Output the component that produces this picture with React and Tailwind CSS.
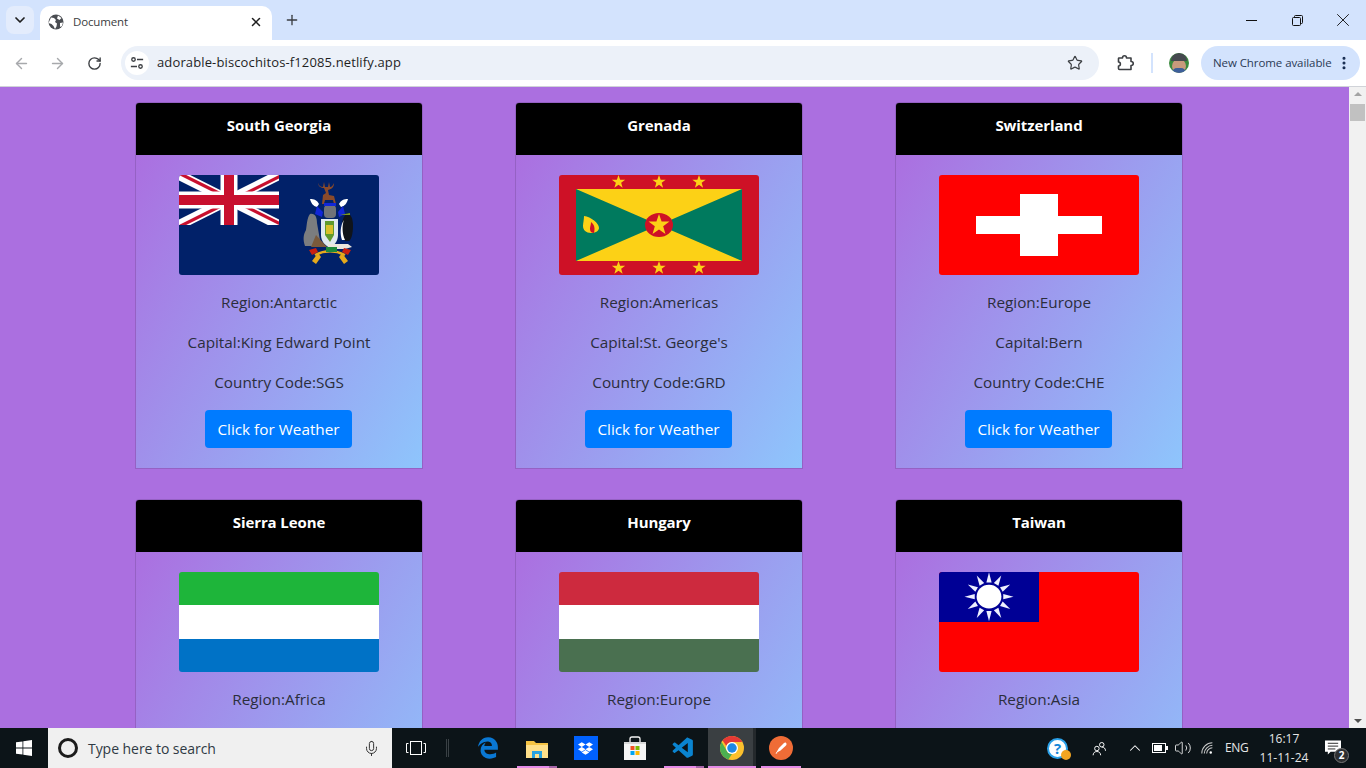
import React from "react";
import { ChevronDown, X, Plus, ArrowLeft, ArrowRight, RotateCw, Star, EllipsisVertical, Mic, ChevronUp, Volume2 } from "lucide-react";
import { FaDropbox, FaEdgeLegacy } from "react-icons/fa";
import { VscVscode } from "react-icons/vsc";

const starPts = (cx, cy, r) => {
  const p = [];
  for (let i = 0; i < 10; i++) {
    const rad = i % 2 ? r * 0.4 : r;
    const a = -Math.PI / 2 + (i * Math.PI) / 5;
    p.push(`${(cx + rad * Math.cos(a)).toFixed(2)},${(cy + rad * Math.sin(a)).toFixed(2)}`);
  }
  return p.join(" ");
};

const FlagSG = () => (
  <svg viewBox="0 0 200 100" className="block w-full h-full">
    <rect width="200" height="100" fill="#012169" />
    <svg x="0" y="0" width="100" height="50" viewBox="0 0 100 50">
      <path d="M0 0L100 50M100 0L0 50" stroke="#fff" strokeWidth="10" />
      <path d="M0 0L50 25M100 50L50 25" stroke="#c8102e" strokeWidth="3.2" transform="translate(1.2 -1.2)" />
      <path d="M100 0L50 25M0 50L50 25" stroke="#c8102e" strokeWidth="3.2" transform="translate(1.2 1.2)" />
      <path d="M50 0V50M0 25H100" stroke="#fff" strokeWidth="17" />
      <path d="M50 0V50M0 25H100" stroke="#c8102e" strokeWidth="10" />
    </svg>
    <path d="M139 8c1 3 3 4 5 4l1-5 1 5h3l1-5 1 5c2 0 3-2 4-4 0 4-2 6-6 7l1 5 5 1 2 8h-2l-1-4h-8l-1 4h-2l1-9 3-2-2-5c-3 0-6-2-6-5z" fill="#8a4a2a" />
    <path d="M131 24c4 0 7 1 9 5l-2 3c-4-1-6-4-7-8zM169 24c-4 0-7 1-9 5l2 3c4-1 6-4 7-8z" fill="#fff" />
    <path d="M138 31l6 6-1 5-7-3zM164 31l-5 6 1 5 6-3z" fill="#1126d8" />
    <rect x="145" y="30" width="12" height="13" rx="4" fill="#6f7278" />
    <rect x="145" y="28" width="12" height="3" fill="#1126d8" />
    <path d="M131 39c5-1 7 3 7 9l4 23h-16c-2-6-2-11 1-16 1-6 1-12 4-16z" fill="#7b7d7f" />
    <path d="M142 44h17v16c0 7-5 11-8 13-4-2-9-6-9-13z" fill="#dfe9ee" />
    <path d="M146 46h9v14l-4 7-5-7z" fill="#5f9a2d" />
    <path d="M147 50h7v9h-7z" fill="#d8c02a" />
    <path d="M137 60l11 12h-16z" fill="#7a5a3b" />
    <path d="M168 38c4 1 6 6 6 13 0 8-2 14-4 15h-4c-2-3-3-8-3-14 0-6 1-10 5-14z" fill="#10141a" />
    <path d="M165 45c-2 5-2 14 1 20h-3c-2-6-2-14 2-20z" fill="#fff" />
    <path d="M161 40l10-2v2z" fill="#7c9a20" />
    <path d="M149 69h20l4 3-7 2h-17z" fill="#ece7dc" />
    <path d="M136 80c10-5 20-5 30 0" fill="none" stroke="#e5a91c" strokeWidth="2.500" />
    <path d="M130 75l7-2 2 4-6 3zM172 75l-7-2-2 4 6 3z" fill="#c81f10" />
    <path d="M133 86l6-8 3 4-5 7zM169 86l-6-8-3 4 5 7z" fill="#e5a91c" />
    <path d="M147 72h11v5h-11z" fill="#1d8a3a" />
  </svg>
);

const FlagGD = () => (
  <svg viewBox="0 0 200 100" className="block w-full h-full">
    <rect width="200" height="100" fill="#ce1126" />
    <rect x="17" y="14" width="166" height="72" fill="#fcd116" />
    <path d="M17 14L100 50L17 86zM183 14L100 50L183 86z" fill="#007a5e" />
    <ellipse cx="100" cy="50" rx="14" ry="12" fill="#ce1126" />
    <polygon points={starPts(100, 50, 11)} fill="#fcd116" />
    {[59.5, 100, 140].map((x) => (
      <React.Fragment key={x}>
        <polygon points={starPts(x, 7, 7)} fill="#fcd116" />
        <polygon points={starPts(x, 93, 7)} fill="#fcd116" />
      </React.Fragment>
    ))}
    <path d="M25 41c7 1 15 7 15 12 0 3-4 5-8 5-5 0-8-3-8-7 0-3 1-6 1-10z" fill="#fcd116" />
    <path d="M32 47c4 3 4 7 3 11-2 0-4-1-4-4 0-3 1-4 1-7z" fill="#ce1126" />
  </svg>
);

const FlagCH = () => (
  <svg viewBox="0 0 200 100" className="block w-full h-full">
    <rect width="200" height="100" fill="#ff0000" />
    <path d="M81 19h38v22h44v18h-44v22H81V59H37V41h44z" fill="#fff" />
  </svg>
);

const Tri = ({ a, b, c }) => (
  <div className="flex flex-col h-full">
    <div className="flex-1" style={{ background: a }} />
    <div className="flex-1" style={{ background: b }} />
    <div className="flex-1" style={{ background: c }} />
  </div>
);

const FlagTW = () => (
  <svg viewBox="0 0 200 100" className="block w-full h-full">
    <rect width="200" height="100" fill="#ff0000" />
    <rect width="100" height="50" fill="#000095" />
    {Array.from({ length: 12 }).map((_, i) => {
      const a = (i * Math.PI) / 6;
      const d = (Math.PI / 12) * 0.7;
      const R = 24.5, r = 14.5;
      const pt = (rad, ang) => `${(50 + rad * Math.cos(ang)).toFixed(2)},${(24.7 + rad * Math.sin(ang)).toFixed(2)}`;
      return <polygon key={i} points={`${pt(R, a)} ${pt(r, a - d)} ${pt(r, a + d)}`} fill="#eef0ff" />;
    })}
    <ellipse cx="50" cy="24.7" rx="13.8" ry="13.2" fill="#000095" />
    <ellipse cx="50" cy="24.7" rx="12.4" ry="11.9" fill="#fff" />
  </svg>
);

const countries = [
  { name: "South Georgia", region: "Antarctic", capital: "King Edward Point", code: "SGS", flag: <FlagSG /> },
  { name: "Grenada", region: "Americas", capital: "St. George's", code: "GRD", flag: <FlagGD /> },
  { name: "Switzerland", region: "Europe", capital: "Bern", code: "CHE", flag: <FlagCH /> },
  { name: "Sierra Leone", region: "Africa", flag: <Tri a="#1eb53a" b="#ffffff" c="#0072c6" /> },
  { name: "Hungary", region: "Europe", flag: <Tri a="#cd2a3e" b="#ffffff" c="#4a7050" /> },
  { name: "Taiwan", region: "Asia", flag: <FlagTW /> },
];

const Card = ({ c }) => (
  <div className="w-[288px] rounded-t-[4px] border border-[#00000020] overflow-hidden">
    <div className="h-[52px] bg-black text-white text-center font-bold text-[15px] leading-[44px] tracking-[-0.1px]">{c.name}</div>
    <div className="h-[313px] bg-[linear-gradient(120deg,#ab6fe0,#8ec5fc)] flex flex-col items-center pt-5 text-[15.3px] text-[#2b2e3c]">
      <div className="w-[200px] h-[100px] rounded-[3px] overflow-hidden">{c.flag}</div>
      <p className="h-6 leading-6 mt-[15px]">Region:{c.region}</p>
      {c.capital && (
        <>
          <p className="h-6 leading-6 mt-4">Capital:{c.capital}</p>
          <p className="h-6 leading-6 mt-4">Country Code:{c.code}</p>
          <button className="mt-[16px] mr-[1px] w-[147px] h-[38px] rounded-[4px] bg-[#007bff] text-white text-[15.3px]">Click for Weather</button>
        </>
      )}
    </div>
  </div>
);

const ChromeLogo = () => (
  <svg viewBox="0 0 48 48" className="w-6 h-6">
    <circle cx="24" cy="24" r="24" fill="#fbc02d" />
    <path d="M24 0a24 24 0 0 1 20.8 12H24a12 12 0 0 0-11.3 8L5.2 8.8A24 24 0 0 1 24 0z" fill="#e53935" />
    <path d="M3.2 12L15 32l-.1.1A12 12 0 0 0 24 36l-7.300 11A24 24 0 0 1 3.200 12z" fill="#4caf50" />
    <circle cx="24" cy="24" r="12" fill="#fff" />
    <circle cx="24" cy="24" r="9.500" fill="#1e88e5" />
  </svg>
);

const Marker = ({ pos, split }) => (
  <div className={`absolute bottom-0 h-[2px] w-10 bg-[#e38ae6] ${pos}`}>
    {split && <div className="absolute right-0 top-0 bottom-0 w-2 bg-[#a565a8]" />}
  </div>
);

export default function App() {
  return (
    <div className="h-screen w-full flex flex-col overflow-hidden bg-white" style={{ fontFamily: '"Open Sans", "Noto Sans", sans-serif' }}>
      {/* tab strip */}
      <div className="h-10 shrink-0 bg-[#d3e3fd] flex items-end relative">
        <div className="w-7 h-7 ml-[6px] mb-[6px] rounded-lg bg-[#e3ecfc] flex items-center justify-center">
          <ChevronDown size={16} strokeWidth={2.6} className="text-[#1f1f1f]" />
        </div>
        <div className="ml-[6px] w-[232px] h-[34px] bg-white rounded-t-[10px] flex items-center pl-2 pb-[3px]">
          <svg viewBox="0 0 16 16" className="w-4 h-4">
            <circle cx="8" cy="8" r="7.500" fill="#4a4d52" />
            <path d="M3 3.500l3 .5 2 2-1 2 2 1.500-.5 3-1.500 2.500-1.500-3-2-2-3-1zM10 1.500l3.500 2.500-2 2-2.500-1.500zM12 9l3-.5-1 3.500-2 1z" fill="#fff" />
          </svg>
          <span className="ml-[9px] text-[11.5px] text-[#3b3d40] tracking-[-0.15px]">Document</span>
          <X size={14} strokeWidth={2.6} className="ml-auto mr-[9px] text-[#1f1f1f]" />
        </div>
        <div className="ml-[13px] mb-[13px] w-[14px] h-[14px] flex items-center justify-center">
          <Plus size={16} strokeWidth={2} className="shrink-0 text-[#3a3d41]" />
        </div>
        <div className="ml-auto h-10 flex">
          <div className="w-[46px] flex items-center justify-center"><div className="w-[11px] h-[1px] bg-[#111]" /></div>
          <div className="w-[46px] flex items-center justify-center">
            <svg viewBox="0 0 11 11" className="w-[11px] h-[11px]" fill="none" stroke="#111" strokeWidth="1">
              <rect x="0.500" y="2.500" width="8" height="8" rx="1" />
              <path d="M2.500 2.500v-1a1 1 0 0 1 1-1h6a1 1 0 0 1 1 1v6a1 1 0 0 1-1 1h-1" />
            </svg>
          </div>
          <div className="w-[46px] flex items-center justify-center"><X size={22} strokeWidth={1} className="text-[#111]" /></div>
        </div>
      </div>
      {/* toolbar */}
      <div className="h-[47px] shrink-0 bg-white border-b border-[#d0d3d8] flex items-start pt-[6px] rounded-t-[8px]">
        <div className="w-[43px] h-[34px] flex items-center justify-center"><ArrowLeft size={17} className="text-[#a7a9ac]" /></div>
        <div className="w-[29px] h-[34px] flex items-center justify-center"><ArrowRight size={17} className="text-[#a7a9ac]" /></div>
        <div className="w-[44px] h-[34px] flex items-center justify-center"><RotateCw size={15} strokeWidth={2.2} className="text-[#3c3f43]" /></div>
        <div className="ml-[5px] w-[978px] h-[34px] rounded-full bg-[#ecf1f9] flex items-center pl-1">
          <div className="w-6 h-6 rounded-full bg-white flex items-center justify-center">
            <svg viewBox="0 0 16 16" className="w-[14px] h-[14px]" fill="none" stroke="#3c3f43" strokeWidth="1.500">
              <circle cx="4" cy="4" r="2" />
              <path d="M8 4h7M1 12h7" />
              <circle cx="12" cy="12" r="2" />
            </svg>
          </div>
          <span className="ml-2 text-[13px] text-[#1f1f1f] tracking-[0.13px]">adorable-biscochitos-f12085.netlify.app</span>
          <Star size={16} strokeWidth={1.8} className="ml-auto mr-4 text-[#3c3f43]" />
        </div>
        <div className="ml-[18px] w-[18px] h-[34px] flex items-center justify-center">
          <svg viewBox="0 0 18 18" className="w-[18px] h-[18px]" fill="none" stroke="#3c3f43" strokeWidth="1.600" strokeLinejoin="round">
            <path d="M2 4h3.500c0-3 4-3 4 0H14v3.500c3 0 3 4 0 4V15.500H2.500c-.5 0-1-.5-1-1V12c2.500 0 2.500-4 0-4V4.500C1.500 4.200 1.700 4 2 4z" />
          </svg>
        </div>
        <div className="ml-[16px] mt-[7px] w-[2px] h-5 bg-[#d3e3fd]" />
        <div className="ml-[16px] mt-[7px] w-5 h-5 rounded-full overflow-hidden bg-[#3b8a3e] relative">
          <div className="absolute left-[3px] top-[6px] w-[14px] h-[14px] rounded-full bg-[#c99a7c]" />
          <div className="absolute left-[2px] top-0 w-4 h-[8px] rounded-t-full bg-[#45494f]" />
          <div className="absolute left-[3px] top-[15px] w-[14px] h-[5px] rounded-t-full bg-[#3d5f9a]" />
        </div>
        <div className="ml-3 w-[159px] h-[34px] rounded-full bg-[#d3e3fd] flex items-center pl-3 text-[11.5px] text-[#2b3a55] tracking-[-0.08px] whitespace-nowrap">
          New Chrome available
          <EllipsisVertical size={16} strokeWidth={2.6} className="ml-auto mr-2 shrink-0 text-[#152a4f]" />
        </div>
      </div>
      {/* page */}
      <div className="flex-1 min-h-0 flex">
        <main className="flex-1 min-w-0 bg-[#ab6fe0] overflow-hidden pt-[15px] pl-[135px]">
          <div className="grid grid-cols-[288px_288px_288px] gap-x-[92px] gap-y-[30px]">
            {countries.map((c) => <Card key={c.name} c={c} />)}
          </div>
        </main>
        <div className="w-[17px] shrink-0 bg-[#f1f1f1] flex flex-col items-center pt-[5px] relative">
          <div className="w-0 h-0 border-x-[4px] border-x-transparent border-b-[4px] border-b-[#a3a3a3]" />
          <div className="mt-[8px] w-[15px] h-[17px] bg-[#c1c1c1]" />
          <div className="mt-auto mb-[5px] w-0 h-0 border-x-[4px] border-x-transparent border-t-[4px] border-t-[#505050]" />
        </div>
      </div>
      {/* taskbar */}
      <div className="h-10 shrink-0 bg-[#0c1418] flex items-center text-white">
        <div className="w-12 h-10 flex items-center justify-center">
          <svg viewBox="0 0 16 16" className="w-4 h-4" fill="#fff">
            <path d="M0 2.300l6.500-.9v6.200H0zM7.300 1.300L16 0v7.600H7.300zM0 8.400h6.500v6.200L0 13.700zM7.300 8.400H16V16l-8.700-1.300z" />
          </svg>
        </div>
        <div className="w-[344px] h-10 bg-[#f0f0f0] flex items-center text-[#3a3a3a]">
          <div className="ml-[10px] w-[20px] h-[20px] rounded-full border-[3px] border-[#1c1c1c]" />
          <span className="ml-[10px] text-[14px] tracking-[-0.05px] text-[#2f3a44]">Type here to search</span>
          <Mic size={17} strokeWidth={1.4} className="ml-auto mr-[12px] text-[#333]" />
        </div>
        <div className="ml-[14px] w-5 flex justify-center">
          <svg viewBox="0 0 20 14" className="w-5 h-[14px]" fill="none" stroke="#fff" strokeWidth="1">
            <rect x="4.500" y="0.500" width="11" height="13" />
            <path d="M2.500 2.500H.5v9h2M17.500 2.500h2v9h-2" />
          </svg>
        </div>
        <div className="ml-[20px] w-[3px] h-[18px] border-x border-[#3a4145]" />
        <div className="ml-[14px] flex h-10 items-center">
          <div className="w-[49px] h-10 flex items-center justify-center"><FaEdgeLegacy size={22} className="text-[#0a78d4]" /></div>
          <div className="relative w-[49px] h-10 flex items-center justify-center">
            <svg viewBox="0 0 24 24" className="w-6 h-6">
              <path d="M1 5h8l2 2h12v15H1z" fill="#f5c344" />
              <path d="M1 9h22v13H1z" fill="#ffe08a" />
              <path d="M7 15h10v7H7z" fill="#29a3e0" />
              <path d="M10 18h4v4h-4z" fill="#ffe08a" />
            </svg>
            <Marker pos="left-[5px]" split />
          </div>
          <div className="w-[49px] h-10 flex items-center justify-center">
            <div className="w-6 h-6 bg-[#0061fe] flex items-center justify-center"><FaDropbox size={15} className="text-white" /></div>
          </div>
          <div className="w-[49px] h-10 flex items-center justify-center">
            <svg viewBox="0 0 24 24" className="w-6 h-6">
              <path d="M7 6V3a2 2 0 0 1 2-2h6a2 2 0 0 1 2 2v3" fill="none" stroke="#f3f3f3" strokeWidth="1.300" />
              <path d="M1 6h22v18H1z" fill="#f5f5f5" />
              <path d="M1 6h22v2H1z" fill="#d9d9d9" />
              <rect x="7.500" y="10" width="4" height="4" fill="#f25022" />
              <rect x="12.500" y="10" width="4" height="4" fill="#7fba00" />
              <rect x="7.500" y="15" width="4" height="4" fill="#00a4ef" />
              <rect x="12.500" y="15" width="4" height="4" fill="#ffb900" />
            </svg>
          </div>
          <div className="relative w-[49px] h-10 flex items-center justify-center">
            <VscVscode size={25} className="text-[#0a84d0]" />
            <Marker pos="left-[5px]" split />
          </div>
          <div className="relative w-[48px] h-10 flex items-center justify-center bg-[#3a3f42]">
            <ChromeLogo />
            <div className="absolute top-0 bottom-0 right-0 w-[3px] bg-[#24292c]" />
            <div className="absolute bottom-0 left-0 right-0 h-[2px] bg-[#e38ae6]" />
          </div>
          <div className="relative w-[50px] h-10 flex items-center justify-center">
            <div className="w-6 h-6 rounded-full bg-[#ef6c36] flex items-center justify-center">
              <svg viewBox="0 0 16 16" className="w-4 h-4" fill="#fff">
                <path d="M3 13l3-5 5-5c1-1 2.500-.5 2.500 1 0 1-.5 1.500-1 2l-5 4.500z" />
                <path d="M2.500 14l2-1-1-1z" />
              </svg>
            </div>
            <Marker pos="left-[5px]" />
          </div>
        </div>
        <div className="ml-auto flex items-center h-10">
          <div className="relative w-[21px] h-[21px] rounded-full bg-[#fff] border-[2px] border-[#2aa0e8] flex items-center justify-center text-[#1585d8] font-bold text-[15px] leading-none">
            ?
            <div className="absolute -right-[5px] -bottom-[3px] w-[10px] h-[10px] rounded-full bg-[#f2a521]" />
          </div>
          <svg viewBox="0 0 20 20" className="ml-[24px] w-[15px] h-[15px]" fill="none" stroke="#fff" strokeWidth="1.300">
            <circle cx="13" cy="5" r="3" /><circle cx="6.500" cy="10" r="3" />
            <path d="M1.500 19c0-3 2-5 5-5s5 2 5 5M13 8c3 0 5 2 5 5" />
          </svg>
          <ChevronUp size={18} strokeWidth={1.4} className="ml-[19px]" />
          <svg viewBox="0 0 16 10" className="ml-[8px] w-4 h-[10px]" fill="none" stroke="#fff">
            <rect x="0.500" y="0.500" width="13" height="9" />
            <rect x="2" y="2" width="8" height="6" fill="#fff" stroke="none" />
            <rect x="14" y="3" width="2" height="4" fill="#fff" stroke="none" />
          </svg>
          <Volume2 size={18} strokeWidth={1.100} className="ml-[6px]" />
          <svg viewBox="0 0 16 16" className="ml-[9px] w-[13px] h-[13px]" fill="none" stroke="#c8c8c8" strokeWidth="1.300">
            <path d="M1 14C1 7 7 1 14 1M4 14c0-5 5-10 10-10M7 14c0-3.500 3.500-7 7-7" />
            <circle cx="12" cy="13" r="1.500" fill="#fff" stroke="none" />
          </svg>
          <span className="ml-[11px] w-[23px] text-[12px] text-[#e6e6e6] tracking-[-0.4px] whitespace-nowrap">ENG</span>
          <div className="ml-[8px] w-[56px] text-center text-[12px] leading-[19px] text-[#e6e6e6]">
            <div>16:17</div><div>11-11-24</div>
          </div>
          <div className="ml-[13px] mr-[25px] relative w-[16px] h-[16px]">
            <svg viewBox="0 0 17 16" className="w-4 h-4">
              <path d="M0 0h17v12H6l-3 3v-3H0z" fill="#fff" />
              <path d="M3 3h11M3 6h11M3 9h8" stroke="#222" strokeWidth="1" />
            </svg>
            <div className="absolute -right-[8px] -bottom-[7px] w-[15px] h-[15px] rounded-full bg-[#2d2f31] border border-[#777] text-[10px] leading-[13px] text-center font-bold">2</div>
          </div>
        </div>
      </div>
    </div>
  );
}
